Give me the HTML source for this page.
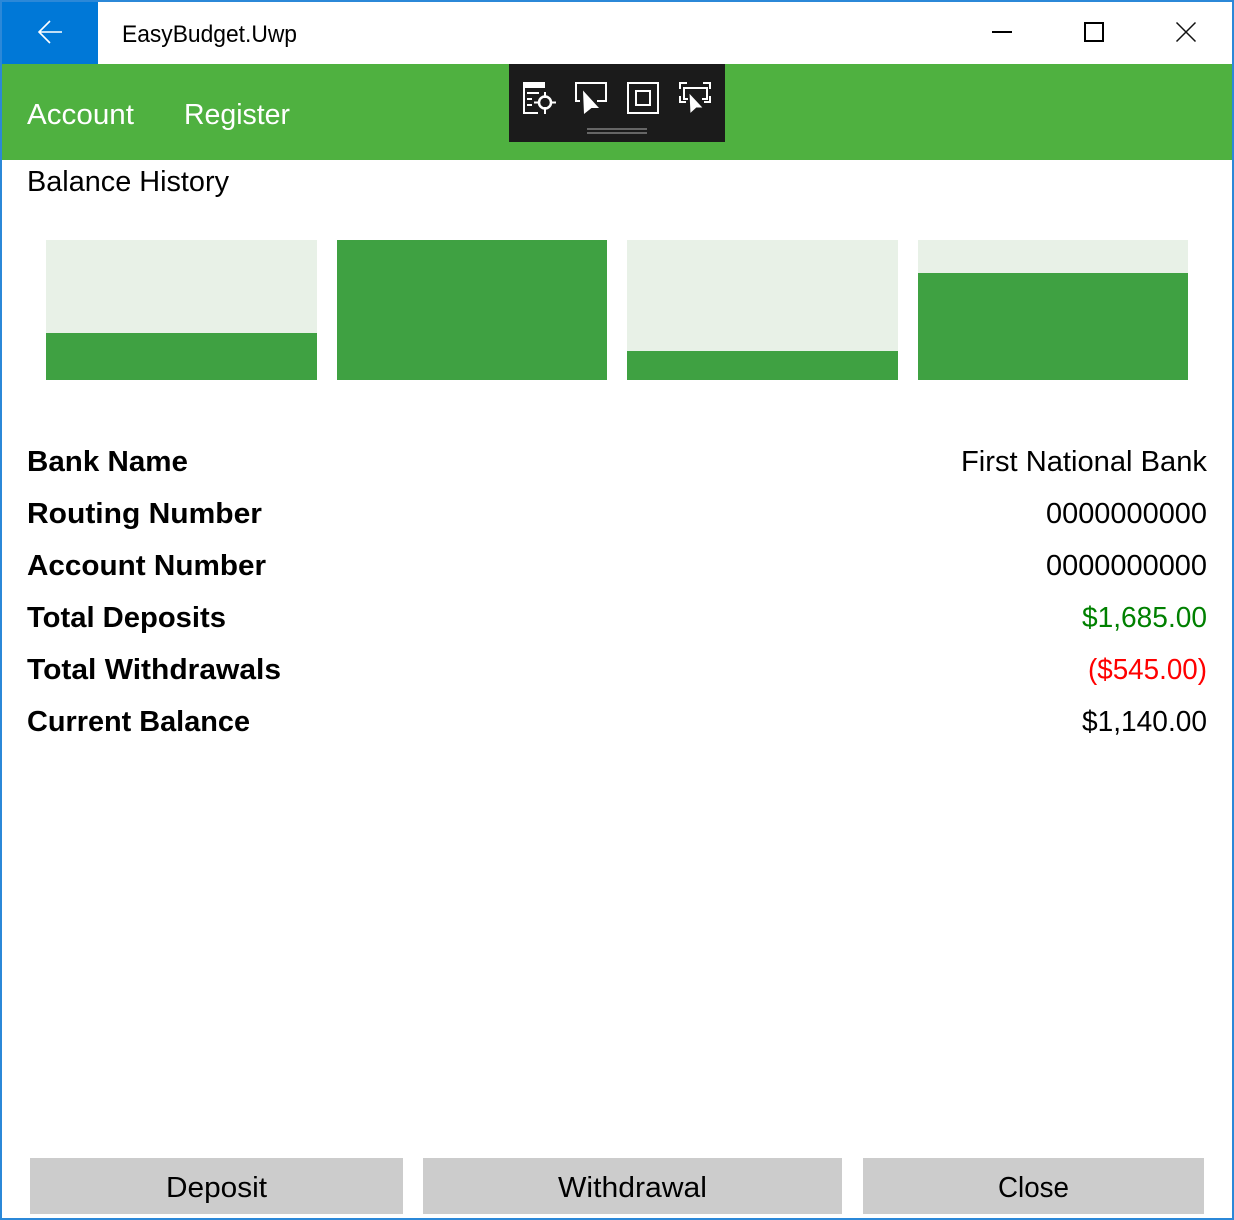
<!DOCTYPE html>
<html lang="en">
<head>
<meta charset="utf-8">
<title>EasyBudget.Uwp</title>
<style>
html,body{margin:0;padding:0;background:#fff;width:1234px;height:1220px;overflow:hidden}
svg{display:block;position:absolute;left:0;top:0}
text{font-family:"Liberation Sans",Arial,sans-serif;fill:#000}
.t{font-size:29px}
.b{font-size:29px;font-weight:bold}
.w{fill:#fff}
</style>
</head>
<body>
<svg width="1234" height="1220" viewBox="0 0 1234 1220" xmlns="http://www.w3.org/2000/svg">
<rect width="1234" height="1220" fill="#fff"/>
<!-- title bar -->
<rect x="2" y="2" width="96" height="62" fill="#0078d7"/>
<path d="M39 32H62M50 21L39 32L50 43" fill="none" stroke="#fff" stroke-width="1.6"/>
<text x="122" y="42" font-size="24" textLength="175" lengthAdjust="spacingAndGlyphs" fill="#111">EasyBudget.Uwp</text>
<rect x="992" y="31" width="20" height="2" fill="#000"/>
<rect x="1085" y="23" width="18" height="18" fill="none" stroke="#000" stroke-width="2"/>
<path d="M1176.500 22.500L1195.500 41.500M1195.500 22.500L1176.500 41.500" fill="none" stroke="#111" stroke-width="1.500"/>
<!-- nav -->
<rect x="2" y="64" width="1230" height="96" fill="#4fb140"/>
<text class="t w" x="27" y="124" textLength="107" lengthAdjust="spacingAndGlyphs">Account</text>
<text class="t w" x="184" y="124" textLength="106" lengthAdjust="spacingAndGlyphs">Register</text>
<!-- debug toolbar -->
<rect x="509" y="64" width="216" height="78" fill="#1b1b1b"/>
<g fill="none" stroke="#fff" stroke-width="2">
  <rect x="523" y="82" width="22" height="6" fill="#fff" stroke="none"/>
  <path d="M524 88V113H538"/>
  <path d="M527 93H539M527 99H532M527 105H532" stroke-width="2"/>
  <circle cx="545" cy="102.500" r="6" stroke-width="2.500"/>
  <path d="M545 92V98M545 107V114M534 102.500H540M550 102.500H556" stroke-width="2"/>
  <path d="M580 101H576V83H606V101H597"/>
  <rect x="628" y="83" width="30" height="30"/>
  <rect x="636" y="91" width="14" height="14"/>
  <path d="M687 83H680V89M703 83H710V89M680 96V102H686M710 96V102H704"/>
  <path d="M688 99H684V88H707V99H702"/>
</g>
<path d="M583 90.500L599 108H591.500L584 114Z" fill="#fff"/>
<path d="M689 92.500L703.500 108H696.500L690 114Z" fill="#fff" stroke="#1b1b1b" stroke-width="1"/>
<rect x="587" y="128" width="60" height="2" fill="#666"/>
<rect x="587" y="132" width="60" height="2" fill="#666"/>
<!-- content -->
<text class="t" x="27" y="191" textLength="202" lengthAdjust="spacingAndGlyphs" fill="#111">Balance History</text>
<rect x="46" y="240" width="271" height="140" fill="#e8f1e7"/>
<rect x="46" y="333" width="271" height="47" fill="#3fa142"/>
<rect x="337" y="240" width="270" height="140" fill="#3fa142"/>
<rect x="627" y="240" width="271" height="140" fill="#e8f1e7"/>
<rect x="627" y="351" width="271" height="29" fill="#3fa142"/>
<rect x="918" y="240" width="270" height="140" fill="#e8f1e7"/>
<rect x="918" y="273" width="270" height="107" fill="#3fa142"/>
<!-- rows -->
<text class="b" x="27" y="471" textLength="161" lengthAdjust="spacingAndGlyphs">Bank Name</text>
<text class="b" x="27" y="523" textLength="235" lengthAdjust="spacingAndGlyphs">Routing Number</text>
<text class="b" x="27" y="575" textLength="239" lengthAdjust="spacingAndGlyphs">Account Number</text>
<text class="b" x="27" y="627" textLength="199" lengthAdjust="spacingAndGlyphs">Total Deposits</text>
<text class="b" x="27" y="679" textLength="254" lengthAdjust="spacingAndGlyphs">Total Withdrawals</text>
<text class="b" x="27" y="731" textLength="223" lengthAdjust="spacingAndGlyphs">Current Balance</text>
<text class="t" x="961" y="471" textLength="246" lengthAdjust="spacingAndGlyphs" fill="#111">First National Bank</text>
<text class="t" x="1046" y="523" textLength="161" lengthAdjust="spacingAndGlyphs" fill="#111">0000000000</text>
<text class="t" x="1046" y="575" textLength="161" lengthAdjust="spacingAndGlyphs" fill="#111">0000000000</text>
<text class="t" x="1082" y="627" textLength="125" lengthAdjust="spacingAndGlyphs" style="fill:#008000">$1,685.00</text>
<text class="t" x="1088" y="679" textLength="119" lengthAdjust="spacingAndGlyphs" style="fill:#ff0000">($545.00)</text>
<text class="t" x="1082" y="731" textLength="125" lengthAdjust="spacingAndGlyphs" fill="#111">$1,140.00</text>
<!-- buttons -->
<rect x="30" y="1158" width="373" height="56" fill="#cccccc"/>
<rect x="423" y="1158" width="419" height="56" fill="#cccccc"/>
<rect x="863" y="1158" width="341" height="56" fill="#cccccc"/>
<text class="t" x="166" y="1197" textLength="101" lengthAdjust="spacingAndGlyphs" fill="#111">Deposit</text>
<text class="t" x="558" y="1197" textLength="149" lengthAdjust="spacingAndGlyphs" fill="#111">Withdrawal</text>
<text class="t" x="998" y="1197" textLength="71" lengthAdjust="spacingAndGlyphs" fill="#111">Close</text>
<!-- window border -->
<rect x="1" y="1" width="1232" height="1218" fill="none" stroke="#2b88d8" stroke-width="2"/>
</svg>
</body>
</html>
